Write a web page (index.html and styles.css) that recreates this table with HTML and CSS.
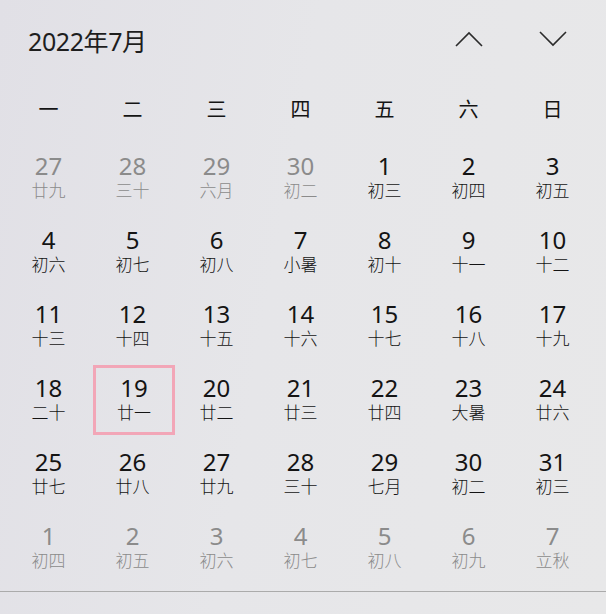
FILE: index.html
```html
<!DOCTYPE html>
<html lang="zh-CN">
<head>
<meta charset="utf-8">
<link rel="stylesheet" href="styles.css">
</head>
<body>
<div class="cal">
  <div class="head">
    <div class="title">2022年7月</div>
    <div class="nav">
      <span class="navbtn"><svg width="30" height="16" viewBox="0 0 30 16"><path d="M2 15 L15 2 L28 15" fill="none" stroke="#2b2b2b" stroke-width="1.6"/></svg></span>
      <span class="navbtn"><svg width="30" height="16" viewBox="0 0 30 16"><path d="M2 1 L15 14 L28 1" fill="none" stroke="#2b2b2b" stroke-width="1.6"/></svg></span>
    </div>
  </div>
  <div class="week">
    <span>一</span><span>二</span><span>三</span><span>四</span><span>五</span><span>六</span><span>日</span>
  </div>
  <div class="grid">
    <div class="cell dim"><b>27</b><i>廿九</i></div>
    <div class="cell dim"><b>28</b><i>三十</i></div>
    <div class="cell dim"><b>29</b><i>六月</i></div>
    <div class="cell dim"><b>30</b><i>初二</i></div>
    <div class="cell"><b>1</b><i>初三</i></div>
    <div class="cell"><b>2</b><i>初四</i></div>
    <div class="cell"><b>3</b><i>初五</i></div>

    <div class="cell"><b>4</b><i>初六</i></div>
    <div class="cell"><b>5</b><i>初七</i></div>
    <div class="cell"><b>6</b><i>初八</i></div>
    <div class="cell"><b>7</b><i>小暑</i></div>
    <div class="cell"><b>8</b><i>初十</i></div>
    <div class="cell"><b>9</b><i>十一</i></div>
    <div class="cell"><b>10</b><i>十二</i></div>

    <div class="cell"><b>11</b><i>十三</i></div>
    <div class="cell"><b>12</b><i>十四</i></div>
    <div class="cell"><b>13</b><i>十五</i></div>
    <div class="cell"><b>14</b><i>十六</i></div>
    <div class="cell"><b>15</b><i>十七</i></div>
    <div class="cell"><b>16</b><i>十八</i></div>
    <div class="cell"><b>17</b><i>十九</i></div>

    <div class="cell"><b>18</b><i>二十</i></div>
    <div class="cell today"><b>19</b><i>廿一</i></div>
    <div class="cell"><b>20</b><i>廿二</i></div>
    <div class="cell"><b>21</b><i>廿三</i></div>
    <div class="cell"><b>22</b><i>廿四</i></div>
    <div class="cell"><b>23</b><i>大暑</i></div>
    <div class="cell"><b>24</b><i>廿六</i></div>

    <div class="cell"><b>25</b><i>廿七</i></div>
    <div class="cell"><b>26</b><i>廿八</i></div>
    <div class="cell"><b>27</b><i>廿九</i></div>
    <div class="cell"><b>28</b><i>三十</i></div>
    <div class="cell"><b>29</b><i>七月</i></div>
    <div class="cell"><b>30</b><i>初二</i></div>
    <div class="cell"><b>31</b><i>初三</i></div>

    <div class="cell dim"><b>1</b><i>初四</i></div>
    <div class="cell dim"><b>2</b><i>初五</i></div>
    <div class="cell dim"><b>3</b><i>初六</i></div>
    <div class="cell dim"><b>4</b><i>初七</i></div>
    <div class="cell dim"><b>5</b><i>初八</i></div>
    <div class="cell dim"><b>6</b><i>初九</i></div>
    <div class="cell dim"><b>7</b><i>立秋</i></div>
  </div>
  <div class="rule"></div>
</div>
</body>
</html>
```
FILE: styles.css
```css
html, body {
  margin: 0;
  padding: 0;
}
body {
  width: 606px;
  height: 614px;
  overflow: hidden;
  background: linear-gradient(100deg, #e1e0e6 0%, #e6e6e9 45%, #e8e8e9 100%);
  font-family: "Noto Sans", "Noto Sans CJK SC", sans-serif;
  color: #141414;
}
.cal {
  padding: 0 0 0 9px;
}
.head {
  height: 84px;
  display: flex;
  align-items: center;
  justify-content: space-between;
}
.title {
  font-size: 25px;
  padding-left: 19px;
  padding-bottom: 4px;
  letter-spacing: -0.4px;
  color: #1e1e1e;
  font-family: "Noto Sans", "Noto Sans CJK SC", sans-serif;
}
.nav {
  display: flex;
  gap: 2px;
  margin-right: 12px;
  padding-bottom: 6px;
}
.navbtn {
  width: 82px;
  display: flex;
  justify-content: center;
}
.week {
  display: grid;
  grid-template-columns: repeat(7, 82px);
  column-gap: 2px;
  height: 50px;
  align-items: center;
  font-size: 20px;
  font-family: "Noto Sans CJK SC", sans-serif;
  padding-bottom: 2px;
  box-sizing: border-box;
}
.week span {
  text-align: center;
  padding-right: 3px;
}
.grid {
  margin-top: 9px;
  display: grid;
  grid-template-columns: repeat(7, 82px);
  grid-auto-rows: 70px;
  column-gap: 2px;
  row-gap: 4px;
}
.cell {
  box-sizing: border-box;
  display: flex;
  flex-direction: column;
  align-items: center;
  justify-content: center;
  padding-bottom: 2px;
  padding-right: 3px;
}
.cell b {
  font-weight: 400;
  font-size: 24px;
  line-height: 24px;
  font-family: "Noto Sans", sans-serif;
}
.cell i {
  font-style: normal;
  font-weight: 300;
  font-size: 17px;
  line-height: 23px;
  font-family: "Noto Sans CJK SC", sans-serif;
}
.cell.dim {
  color: #8b8b8b;
}
.cell.today {
  border: 3px solid #f2a6b7;
  padding-right: 0;
  padding-left: 0;
}
.rule {
  margin: 8px 0 0 -9px;
  height: 1px;
  background: #ababab;
  width: 606px;
}
```
